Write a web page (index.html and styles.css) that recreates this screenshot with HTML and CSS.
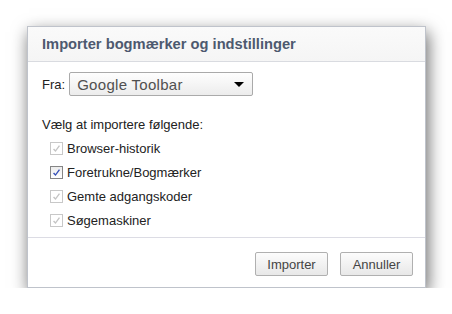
FILE: index.html
```html
<!DOCTYPE html>
<html lang="da">
<head>
    <meta charset="UTF-8">
    <title>Importer bogmærker og indstillinger</title>
    <link rel="stylesheet" href="styles.css">
</head>
<body>
<div class="dialog">
    <div class="head">Importer bogmærker og indstillinger</div>
    <div class="content">
        <div class="from">
            <span class="label">Fra:</span>
            <div class="select">
                <span>Google Toolbar</span>
                <i class="arrow"></i>
            </div>
        </div>
        <p class="intro">Vælg at importere følgende:</p>
        <ul class="items">
            <li><span class="box off"><svg viewBox="0 0 13 13"><path d="M3 7l2.3 2.5L10 3.2"/></svg></span>Browser-historik</li>
            <li><span class="box on"><svg viewBox="0 0 13 13"><path d="M3 7l2.3 2.5L10 3.2"/></svg></span>Foretrukne/Bogmærker</li>
            <li><span class="box off"><svg viewBox="0 0 13 13"><path d="M3 7l2.3 2.5L10 3.2"/></svg></span>Gemte adgangskoder</li>
            <li><span class="box off"><svg viewBox="0 0 13 13"><path d="M3 7l2.3 2.5L10 3.2"/></svg></span>Søgemaskiner</li>
        </ul>
    </div>
    <div class="foot">
        <button class="btn">Importer</button>
        <button class="btn">Annuller</button>
    </div>
</div>
</body>
</html>
```

FILE: styles.css
```css
*{margin:0;padding:0;list-style:none;box-sizing:border-box;}
html,body{background:#fff;}
body{padding:26px 0 0 27px;font-family:"Liberation Sans",Arial,sans-serif;font-size:13px;color:#222;}

.dialog{width:399px;height:262px;background:#fff;border:1px solid #bfc3cb;
    box-shadow:2px 6px 16px rgba(0,0,0,.6);display:flex;flex-direction:column;}
.head{height:35px;line-height:34px;padding-left:14px;border-bottom:1px solid #d9dbe0;
    background:linear-gradient(#fafafa,#f5f5f5);font-size:14.7px;font-weight:bold;color:#4d596f;}

.content{flex:1;padding:10px 0 0 14px;}
.from{display:flex;align-items:center;height:24px;}
.label{margin-right:4px;}
.select{width:184px;height:24px;border:1px solid #aaa;border-radius:2px;
    background:linear-gradient(#fefefe,#ececec);display:flex;align-items:center;
    justify-content:space-between;padding:0 8px 0 7px;color:#505050;font-size:15px;letter-spacing:.3px;}
.arrow{width:0;height:0;border-left:5px solid transparent;border-right:5px solid transparent;
    border-top:5px solid #000;margin-top:1px;}

.intro{margin-top:21px;line-height:16px;margin-bottom:3px;}
.items li{height:24px;display:flex;align-items:center;padding-left:8px;}
.box{width:13px;height:13px;border:1px solid #c8c8c8;background:#fff;margin-right:4px;display:block;}
.box svg{display:block;width:11px;height:11px;fill:none;stroke:#c4c4c4;stroke-width:1.6;}
.box.on{border-color:#858585;background:linear-gradient(#ececec,#fff);}
.box.on svg{stroke:#3550b8;}

.foot{height:50px;border-top:1px solid #dcdce4;display:flex;justify-content:flex-end;
    padding:14px 12px 0 0;gap:12px;}
.btn{width:73px;height:24px;border:1px solid #b0b0b0;border-radius:2px;
    background:linear-gradient(#fcfcfc,#e8e8e8);font-family:inherit;font-size:13px;color:#444;}
```
